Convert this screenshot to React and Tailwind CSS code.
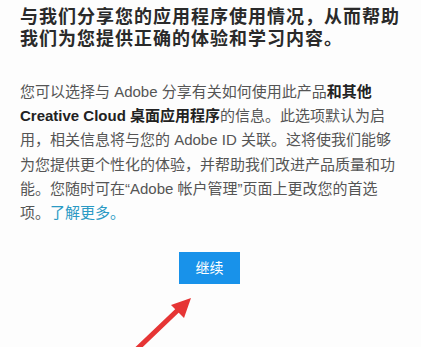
/**
 * Adobe 使用情况分享提示页
 */
const BODY_LINES = [
  <>您可以选择与 Adobe 分享有关如何使用此产品<b className="font-bold text-[#222]">和其他</b></>,
  <><b className="font-bold text-[#222]">Creative Cloud 桌面应用程序</b>的信息。此选项默认为启</>,
  <>用，相关信息将与您的 Adobe ID 关联。这将使我们能够</>,
  <>为您提供更个性化的体验，并帮助我们改进产品质量和功</>,
  <>能。您随时可在“Adobe 帐户管理”页面上更改您的首选</>,
  <>项。<a href="#" className="text-[#2b9ac4]">了解更多。</a></>,
]

export default function App() {
  return (
    <div
      className="relative h-[347px] w-[421px] overflow-hidden bg-[#fdfdfd]"
      style={{ fontFamily: '"Liberation Sans", "Noto Sans CJK SC", sans-serif' }}
    >
      <div className="pl-5 pt-[6px]">
        {/* 标题 */}
        <h1 className="text-[18px] font-bold leading-[22px] tracking-[1px] text-[#2a2a2a]">
          <span className="block whitespace-nowrap">与我们分享您的应用程序使用情况，从而帮助</span>
          <span className="block whitespace-nowrap">我们为您提供正确的体验和学习内容。</span>
        </h1>

        {/* 正文 */}
        <p className="mt-[30px] text-[15px] leading-[24.2px] text-[#555]">
          {BODY_LINES.map((line, i) => (
            <span key={i} className="block whitespace-nowrap">
              {line}
            </span>
          ))}
        </p>
      </div>

      <div className="mt-[27px] flex justify-center pr-[2px]">
        <button className="h-[32px] w-[61px] bg-[#1892ea] text-[14px] text-white">继续</button>
      </div>

      {/* 红色箭头标注 */}
      <svg className="absolute left-0 top-0" width="421" height="347" viewBox="0 0 421 347">
        <line x1="136" y1="350" x2="180" y2="308" stroke="#e63535" strokeWidth="5" strokeLinecap="round" />
        <polygon points="191,298 184,318 171,305" fill="#e63535" />
      </svg>
    </div>
  )
}
